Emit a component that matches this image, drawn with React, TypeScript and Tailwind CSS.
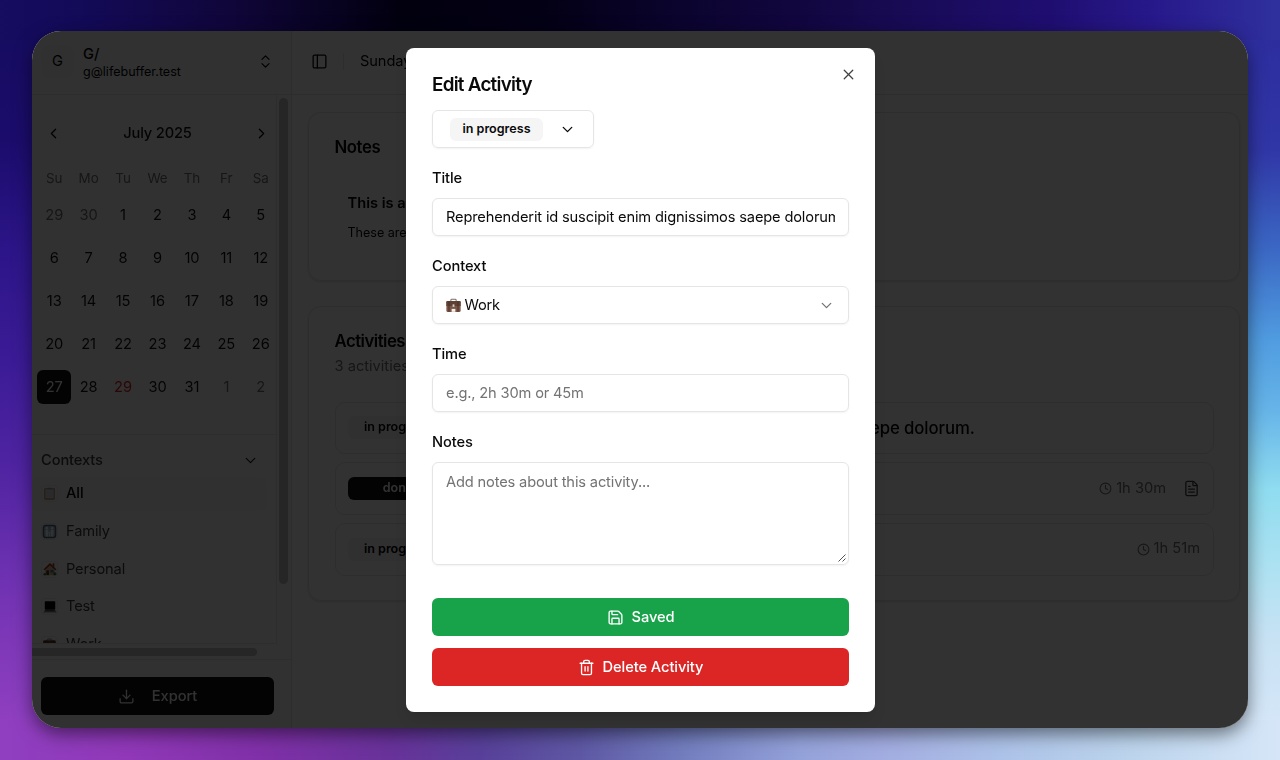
import React from "react";
import {
  ChevronDown,
  ChevronLeft,
  ChevronRight,
  ChevronsUpDown,
  Clock,
  Download,
  FileText,
  PanelLeft,
  Save,
  Trash2,
  X,
} from "lucide-react";

const weekdays = ["Su", "Mo", "Tu", "We", "Th", "Fr", "Sa"];
const weeks = [
  [29, 30, 1, 2, 3, 4, 5],
  [6, 7, 8, 9, 10, 11, 12],
  [13, 14, 15, 16, 17, 18, 19],
  [20, 21, 22, 23, 24, 25, 26],
  [27, 28, 29, 30, 31, 1, 2],
];

function dayClass(week: number, day: number) {
  if (week === 4 && day === 27) return "bg-[#171717] text-[#fafafa]";
  if (week === 4 && day === 29) return "text-[#dc2626]";
  if ((week === 0 && day > 20) || (week === 4 && day < 10)) return "text-[#737373]";
  return "text-[#171717]";
}

function Briefcase({ className }: { className?: string }) {
  return (
    <svg viewBox="0 0 16 16" className={className}>
      <path d="M5.2 3.8V2.2c0-.5.4-.9.9-.9h3.8c.5 0 .9.4.9.9v1.6" fill="none" stroke="#77706c" strokeWidth="1.1" />
      <rect x="0.4" y="3.2" width="15.2" height="11.6" rx="1.2" fill="#7a5545" />
      <path d="M.4 4.4c0-.7.5-1.2 1.2-1.2h12.8c.7 0 1.2.5 1.2 1.2v4.2H.4z" fill="#5e4034" />
      <path d="M3.2 3.4v11.2M12.8 3.4v11.2" stroke="#49302a" strokeWidth="1" />
      <rect x="7" y="6.8" width="2" height="2.6" fill="#d8cfc8" />
      <path d="M6 14.8v-3.2h4v3.2z" fill="#f3efec" />
    </svg>
  );
}

function Clipboard() {
  return (
    <svg viewBox="0 0 16 16" className="h-[13px] w-[13px]">
      <rect x="1.5" y="1.6" width="13" height="14" rx="1" fill="#b98a63" />
      <rect x="2.8" y="2.8" width="10.4" height="11.2" fill="#dcdce4" />
      <rect x="5.5" y="0.8" width="5" height="2" rx="0.8" fill="#9c9ca4" />
      <path d="M4 6h8M4 8.5h8M4 11h8" stroke="#c9c9d2" strokeWidth="0.7" />
    </svg>
  );
}

function Family() {
  return (
    <svg viewBox="0 0 16 16" className="h-[15px] w-[15px] shrink-0">
      <rect x="1.4" y="1.4" width="13.2" height="13.2" rx="2.6" fill="#9fb4c8" stroke="#46647f" strokeWidth="1.3" />
      <g fill="#fbfdff">
        <circle cx="5.2" cy="4.4" r="1.4" />
        <circle cx="10.8" cy="4.4" r="1.4" />
        <path d="M3.6 6.2h3.2v3.2l-.4 3.800H4l-.4-3.800z" />
        <path d="M9.2 6.2h3.200v3.200l-.4 3.800H9.600l-.4-3.800z" />
        <circle cx="8" cy="9.200" r="0.900" />
        <path d="M7.300 10.200h1.400v3H7.300z" />
      </g>
    </svg>
  );
}

function House() {
  return (
    <svg viewBox="0 0 16 16" className="h-[14px] w-[14px]">
      <path d="M2.6 7.5 8 2.5l5.4 5V15H2.6z" fill="#d9b98c" />
      <path d="M0.5 8.5 8 1l7.5 7.5-1.4 1L8 3.8 1.9 9.5z" fill="#a03024" />
      <rect x="11" y="1.5" width="2" height="4" fill="#8d4633" />
      <rect x="3.8" y="9.5" width="3" height="5.5" fill="#5b3320" />
      <rect x="8.5" y="9" width="3.5" height="3" fill="#3f7ab5" />
      <circle cx="13.5" cy="13.5" r="1.9" fill="#3c7b3d" />
      <circle cx="2" cy="14" r="1.5" fill="#3c7b3d" />
    </svg>
  );
}

function Laptop() {
  return (
    <svg viewBox="0 0 16 16" className="h-[14px] w-[14px]">
      <rect x="2" y="1.5" width="12" height="9.5" rx="0.7" fill="#050505" />
      <path d="M2 11.3h12l1.7 3H.3z" fill="#8a8a8a" />
      <path d="M2.7 12.2h10.6" stroke="#333" strokeWidth="1" />
    </svg>
  );
}

const contexts = [
  { name: "All", icon: <Clipboard />, active: true },
  { name: "Family", icon: <Family />, active: false },
  { name: "Personal", icon: <House />, active: false },
  { name: "Test", icon: <Laptop />, active: false },
  { name: "Work", icon: <Briefcase className="h-[13px] w-[13px]" />, active: false },
];

function Sidebar() {
  return (
    <aside className="flex w-[260px] shrink-0 flex-col border-r border-[#e5e5e5] bg-[#fafafa] text-[14.65px] tracking-[-0.05px]">
      <div className="flex h-16 shrink-0 items-center border-b border-[#e5e5e5] pr-[17px] pb-[2px] pl-[9px]">
        <span className="flex h-[33px] w-[33px] items-center justify-center rounded-lg bg-[#f5f5f5] text-[#0a0a0a]">G</span>
        <span className="ml-[9px] flex flex-1 flex-col pt-[2px] text-[#0a0a0a]">
          <span className="text-[14.65px] font-medium leading-[17px]">G/</span>
          <span className="text-[12.55px] leading-[17px] tracking-normal">g@lifebuffer.test</span>
        </span>
        <ChevronsUpDown className="h-[17px] w-[17px] text-[#0a0a0a]" strokeWidth={1.7} />
      </div>
      <div className="flex h-[565px] shrink-0 border-b border-[#e5e5e5]">
        <div className="flex w-full flex-col">
          <div className="flex h-[549px]">
            <div className="flex w-[245px] shrink-0 flex-col overflow-hidden border-r border-b border-[#e5e5e5]">
              <div className="flex h-[340px] shrink-0 flex-col border-b border-[#e5e5e5] pl-[5px]">
                <div className="mt-5 flex h-9 w-[241px] items-center justify-between px-2">
                  <ChevronLeft className="h-[17px] w-[17px] text-[#0a0a0a]" strokeWidth={1.8} />
                  <span className="pt-[2px] font-medium tracking-[-0.15px] text-[#171717]">July 2025</span>
                  <ChevronRight className="h-[17px] w-[17px] text-[#0a0a0a]" strokeWidth={1.8} />
                </div>
                <div className="mt-[17px] grid w-[241px] grid-cols-7 text-center text-[13.4px] leading-5 text-[#737373]">
                  {weekdays.map((d) => (
                    <span key={d}>{d}</span>
                  ))}
                </div>
                <div className="mt-[10px] flex flex-col gap-[9px]">
                  {weeks.map((week, w) => (
                    <div key={w} className="grid w-[241px] grid-cols-7">
                      {week.map((d) => (
                        <span
                          key={d}
                          className={`flex h-[34px] items-center justify-center rounded-md pt-px ${dayClass(w, d)}`}
                        >
                          {d}
                        </span>
                      ))}
                    </div>
                  ))}
                </div>
              </div>
              <div className="mt-[1px] flex h-[33px] shrink-0 items-center justify-between pt-4 pr-[17px] pl-[9px]">
                <span className="font-medium tracking-[-0.1px] text-[#404040]">Contexts</span>
                <ChevronDown className="h-[17px] w-[17px] text-[#262626]" strokeWidth={1.8} />
              </div>
              <div className="mt-[8px] flex flex-col gap-[4.2px]">
                {contexts.map((c) => (
                  <div
                    key={c.name}
                    className={`flex h-[33.5px] w-[235px] shrink-0 items-center rounded-md pl-[9px] ${
                      c.active ? "bg-[#f4f4f5] font-medium text-[#0a0a0a]" : "tracking-[-0.15px] text-[#3f3f46]"
                    }`}
                  >
                    <span className="flex h-[17px] w-[17px] items-center justify-center rounded-sm border border-[#e8e8e8]">
                      {c.icon}
                    </span>
                    <span className="ml-[8px] pt-px">{c.name}</span>
                  </div>
                ))}
              </div>
            </div>
            <div className="flex flex-1 pt-[3px] pl-[2px]">
              <div className="h-[486px] w-[9px] rounded-full bg-[#c1c1c1]" />
            </div>
          </div>
          <div className="flex h-[15px] items-center">
            <div className="h-2 w-[225px] rounded-r-full bg-[#c1c1c1]" />
          </div>
        </div>
      </div>
      <div className="px-[9px] pt-[17px]">
        <div className="flex h-[38px] w-[233px] items-center justify-center gap-[17px] rounded-md bg-[#171717] font-medium text-[#fafafa]">
          <Download className="h-[17px] w-[17px]" strokeWidth={1.8} />
          <span className="pt-px">Export</span>
        </div>
      </div>
    </aside>
  );
}

function StatusPill({ done, wide }: { done?: boolean; wide?: boolean }) {
  return (
    <span
      className={`flex h-[23px] shrink-0 items-center justify-center rounded-md text-[12.55px] font-semibold ${
        wide ? "w-[100px]" : "w-[93px]"
      } ${done ? "bg-[#171717] text-[#fafafa]" : "bg-[#f5f5f5] text-[#0a0a0a]"}`}
    >
      {done ? "done" : "in progress"}
    </span>
  );
}

function ActivityRow({ title, done, time, note }: { title?: string; done?: boolean; time?: string; note?: boolean }) {
  return (
    <div className="flex h-[52.5px] items-center rounded-[10px] border border-[#e5e5e5] px-[12.5px]">
      <StatusPill done={done} wide />
      <span className="ml-[60px] flex-1 whitespace-nowrap pt-px text-[16.74px] font-medium tracking-[-0.08px] text-[#0a0a0a]">
        {title}
      </span>
      {time && (
        <span className="flex items-center gap-1 text-[14.65px] text-[#737373]">
          <Clock className="h-[13px] w-[13px]" strokeWidth={2} />
          {time}
        </span>
      )}
      {note && <FileText className="ml-[17px] h-[17px] w-[17px] text-[#404040]" strokeWidth={1.8} />}
    </div>
  );
}

function Main() {
  return (
    <main className="flex min-w-0 flex-1 flex-col bg-white text-[#0a0a0a]">
      <header className="flex h-16 shrink-0 items-center border-b border-[#e5e5e5] pb-[3px] pl-[19px]">
        <PanelLeft className="h-[17px] w-[17px]" strokeWidth={1.8} />
        <div className="ml-[15px] h-[17px] w-px bg-[#e5e5e5]" />
        <span className="ml-[16px] pt-px text-[14.65px] tracking-[-0.1px]">Sunday, July 27, 2025</span>
      </header>
      <div className="flex flex-col gap-[25px] pt-[17px] pr-2 pl-4">
        <section className="flex h-[169px] flex-col rounded-[13px] border border-[#e5e5e5] px-[25.5px] pt-[25px] shadow-sm">
          <h2 className="text-[16.74px] font-semibold leading-[18px] tracking-[-0.4px]">Notes</h2>
          <div className="mt-[37px] flex flex-col gap-[11px] pl-[13px]">
            <p className="text-[14.65px] font-semibold leading-5">This is a note</p>
            <p className="text-[12.55px] leading-[18px]">These are notes for the day</p>
          </div>
        </section>
        <section className="flex h-[295px] flex-col rounded-[13px] border border-[#e5e5e5] px-[25.5px] pt-[25px] shadow-sm">
          <h2 className="text-[16.74px] font-semibold leading-[18px] tracking-[-0.5px]">Activities</h2>
          <p className="mt-[6px] text-[14.65px] leading-[20px] text-[#737373]">3 activities</p>
          <div className="mt-[25.6px] flex flex-col gap-[8.3px]">
            <ActivityRow title="Reprehenderit id suscipit enim dignissimos saepe dolorum." />
            <ActivityRow done time="1h 30m" note />
            <ActivityRow time="1h 51m" />
          </div>
        </section>
      </div>
    </main>
  );
}

const fieldBox = "flex h-[38px] items-center rounded-md border border-[#e5e5e5] px-[13px] shadow-xs";

function Field({ label, children }: { label: string; children: React.ReactNode }) {
  return (
    <div className="flex flex-col">
      <label className="mb-[9px] font-medium leading-[21px]">{label}</label>
      {children}
    </div>
  );
}

function EditDialog() {
  return (
    <div className="absolute top-12 left-[406px] flex h-[664px] w-[469px] flex-col rounded-lg bg-white px-[26px] text-[14.65px] tracking-[-0.08px] text-[#0a0a0a] shadow-lg">
      <div className="flex items-start justify-between">
        <h1 className="mt-[26px] text-[18.83px] font-semibold leading-[21px] tracking-[-0.75px]">Edit Activity</h1>
        <X className="mt-[18px] -mr-[8px] h-[17px] w-[17px] text-[#404040]" strokeWidth={1.8} />
      </div>
      <div className="mt-[15px] flex h-[38px] w-[162px] items-center rounded-md border border-[#e5e5e5] pl-[17px] tracking-normal shadow-xs">
        <StatusPill />
        <ChevronDown className="ml-[16px] h-[17px] w-[17px]" strokeWidth={1.9} />
      </div>
      <div className="mt-5 flex flex-col gap-5">
        <Field label="Title">
          <div className={fieldBox}>
            <span className="w-full overflow-hidden pt-px tracking-[-0.155px] whitespace-nowrap">
              Reprehenderit id suscipit enim dignissimos saepe dolorum.
            </span>
          </div>
        </Field>
        <Field label="Context">
          <div className={fieldBox}>
            <Briefcase className="h-[15px] w-[15px]" />
            <span className="ml-[3.5px] flex-1 pt-px tracking-[-0.2px]">Work</span>
            <ChevronDown className="h-[17px] w-[17px] text-[#737373]" strokeWidth={1.8} />
          </div>
        </Field>
        <Field label="Time">
          <div className={fieldBox}>
            <span className="pt-px tracking-[-0.16px] text-[#737373]">e.g., 2h 30m or 45m</span>
          </div>
        </Field>
        <Field label="Notes">
          <div className="flex h-[103px] flex-col justify-between rounded-md border border-[#e5e5e5] pt-[9px] pl-[13px] shadow-xs">
            <span className="leading-[21px] tracking-[-0.15px] text-[#737373]">Add notes about this activity...</span>
            <svg viewBox="0 0 10 10" className="mr-px mb-px h-[10px] w-[10px] self-end" stroke="#555" strokeWidth="1">
              <path d="M1.500 8.500 8.500 1.500M5.500 8.500 8.500 5.500" />
            </svg>
          </div>
        </Field>
      </div>
      <button className="mt-[33px] flex h-[38px] shrink-0 items-center justify-center gap-[8px] rounded-md bg-[#18a34a] font-medium text-white">
        <Save className="h-[17px] w-[17px]" strokeWidth={1.9} />
        <span className="pt-px">Saved</span>
      </button>
      <button className="mt-[12px] flex h-[38px] shrink-0 items-center justify-center gap-[8px] rounded-md bg-[#dc2626] font-medium text-white">
        <Trash2 className="h-[17px] w-[17px]" strokeWidth={1.9} />
        <span className="pt-px">Delete Activity</span>
      </button>
    </div>
  );
}

export default function App() {
  return (
    <div className="relative flex h-[760px] w-[1280px] overflow-hidden pt-[31px] pl-8 font-[Inter,sans-serif]">
      <div className="absolute inset-0 flex flex-col">
        <div className="h-10 bg-[linear-gradient(90deg,#160c60_0px,#130a58_80px,#10063a_230px,#02000f_400px,#030014_540px,#0b042e_680px,#12063f_800px,#170a50_880px,#1f0e70_1050px,#27188a_1150px,#2f309e_1280px)]" />
        <div className="flex flex-1 justify-between">
          <div className="w-12 bg-[linear-gradient(180deg,#160c60_0px,#1b0c6c_100px,#2c1588_210px,#3b1b96_320px,#5024a2_430px,#7434b4_560px,#8f3fc0_680px)]" />
          <div className="w-12 bg-[linear-gradient(180deg,#2d2d9e_0px,#3036a6_110px,#3b68c4_210px,#509ce0_300px,#66b4e8_370px,#90dcf0_450px,#aee2f2_530px,#c8e2f4_600px,#d4e6f8_680px)]" />
        </div>
        <div className="h-10 bg-[linear-gradient(90deg,#8f3fc0_0px,#9038b8_130px,#8030a8_260px,#68329a_390px,#58409a_480px,#5e58a4_580px,#7480c0_690px,#94a2da_800px,#a2ace0_880px,#adc2e8_1000px,#bcd4ec_1130px,#d6e6f8_1280px)]" />
      </div>
      <div className="relative h-[697px] w-[1216px] rounded-[29px] bg-[#333333] shadow-[0_6px_18px_rgba(0,0,0,0.5)]">
        <div className="relative isolate flex h-full w-full overflow-hidden rounded-[29px] opacity-[0.999]">
          <Sidebar />
          <Main />
          <div className="absolute -inset-px bg-black/80" />
        </div>
      </div>
      <EditDialog />
    </div>
  );
}
